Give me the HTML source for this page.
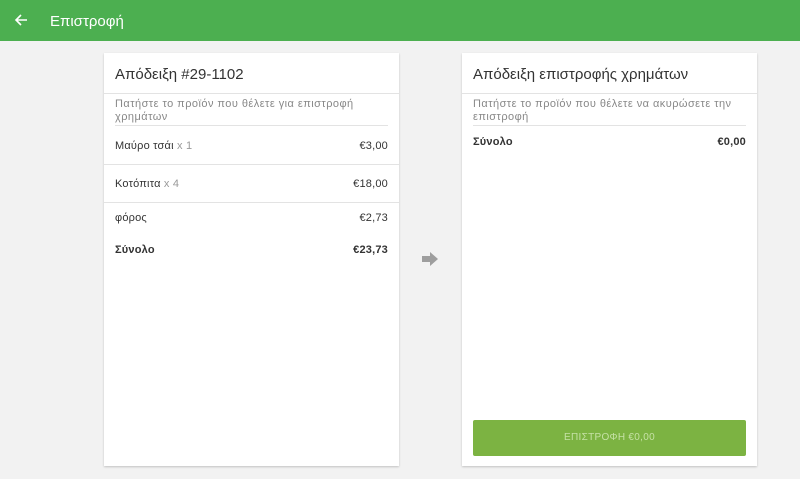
<!DOCTYPE html>
<html><head><meta charset="utf-8"><style>
*{margin:0;padding:0;box-sizing:border-box}
body{width:800px;height:479px;background:#f2f2f2;font-family:"Liberation Sans","Noto Sans CJK SC",sans-serif;position:relative;overflow:hidden;color:#333}
.top{position:absolute;left:0;top:0;width:800px;height:41px;background:#4caf50;color:#fff}
.top .t{position:absolute;left:50px;top:13px;font-size:15px}
.top svg{position:absolute;left:14px;top:13px}
.card{position:absolute;top:53px;width:295px;height:413px;background:#fff;box-shadow:0 1px 2px rgba(0,0,0,.2)}
.h{height:41px;border-bottom:1px solid #e3e3e3;font-size:15px;padding:13px 0 0 11px;color:#333}
.sub{margin:0 11px;padding-top:4px;height:32px;border-bottom:1px solid #e3e3e3;font-size:11px;letter-spacing:.45px;line-height:13px;color:#888}
.row{position:absolute;left:11px;right:11px;font-size:11px;color:#333;letter-spacing:.2px}
.row span.r{position:absolute;right:0}
.g{color:#999}
.line{position:absolute;left:0;right:0;height:1px;background:#e3e3e3}
.b{font-weight:bold}
.btn{position:absolute;left:11px;top:367px;width:273px;height:36px;background:#7cb342;border-radius:2px;color:#c5e1a5;font-size:10px;letter-spacing:.3px;text-align:center;line-height:36px}
</style></head><body>
<div class="top"><svg width="14" height="14" viewBox="0 0 14 14"><path d="M13 7H2M7 2L2 7l5 5" stroke="#fff" stroke-width="1.6" fill="none"/></svg><div class="t">Επιστροφή</div></div>
<div class="card" style="left:104px">
<div class="h">Απόδειξη #29-1102</div>
<div class="sub" style="padding-right:20px">Πατήστε το προϊόν που θέλετε για επιστροφή χρημάτων</div>
<div class="row" style="top:87px">Μαύρο τσάι <span class="g">x 1</span><span class="r">€3,00</span></div>
<div class="line" style="top:111px"></div>
<div class="row" style="top:125px">Κοτόπιτα <span class="g">x 4</span><span class="r">€18,00</span></div>
<div class="line" style="top:149px"></div>
<div class="row" style="top:159px">φόρος<span class="r">€2,73</span></div>
<div class="row b" style="top:191px">Σύνολο<span class="r">€23,73</span></div>
</div>
<svg style="position:absolute;left:421px;top:251px" width="18" height="16" viewBox="0 0 18 16"><path d="M1 5h8V1l8 7-8 7v-4H1z" fill="#9e9e9e"/></svg>
<div class="card" style="left:462px">
<div class="h">Απόδειξη επιστροφής χρημάτων</div>
<div class="sub">Πατήστε το προϊόν που θέλετε να ακυρώσετε την επιστροφή</div>
<div class="row b" style="top:83px">Σύνολο<span class="r">€0,00</span></div>
<div class="btn">ΕΠΙΣΤΡΟΦΗ €0,00</div>
</div>
</body></html>
